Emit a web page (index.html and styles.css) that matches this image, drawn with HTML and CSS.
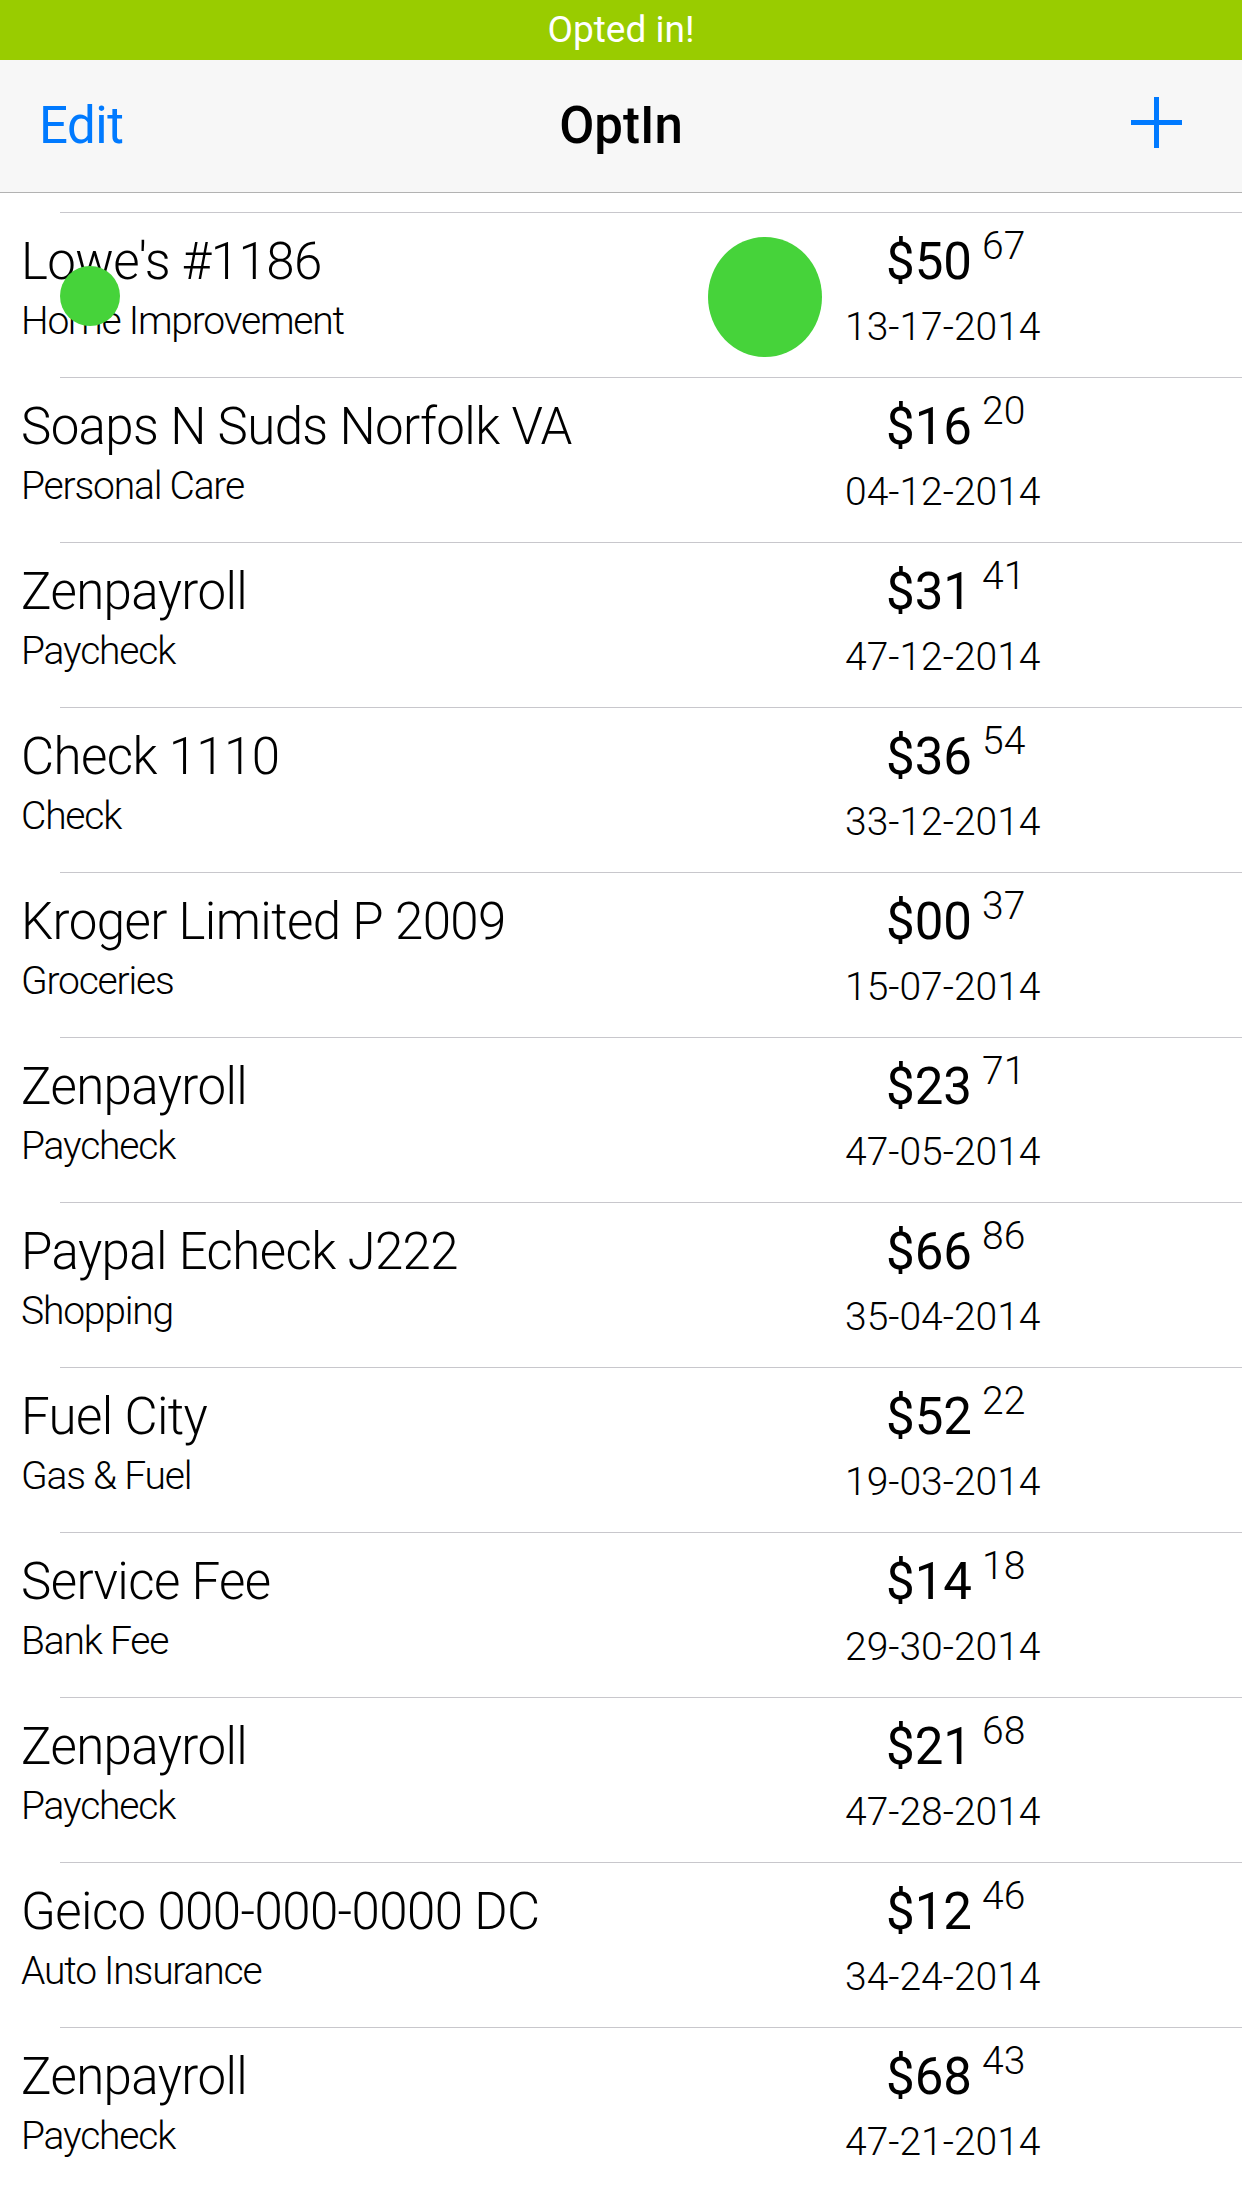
FILE: index.html
```html
<!DOCTYPE html>
<html lang="en">
    <head>
        <meta charset="UTF-8" />
        <meta name="viewport" content="width=device-width, initial-scale=1.0" />
        <title>OptIn</title>
        <link rel="stylesheet" href="styles.css">
    </head>
    <body>
        <div class="banner">Opted in!</div>

        <div class="navbar">
            <span class="nav-edit">Edit</span>
            <span class="nav-title">OptIn</span>
            <svg class="nav-add" width="51" height="51" viewBox="0 0 51 51">
                <rect x="23" y="0" width="5" height="51" fill="#007aff" />
                <rect x="0" y="23" width="51" height="5" fill="#007aff" />
            </svg>
        </div>

        <ul class="list">
            <li class="row">
                <div class="info">
                    <div class="name">Lowe's #1186</div>
                    <div class="category">Home Improvement</div>
                </div>
                <div class="money">
                    <div class="amount">$50<sup>67</sup></div>
                    <div class="date">13-17-2014</div>
                </div>
            </li>
            <li class="row">
                <div class="info">
                    <div class="name">Soaps N Suds Norfolk VA</div>
                    <div class="category">Personal Care</div>
                </div>
                <div class="money">
                    <div class="amount">$16<sup>20</sup></div>
                    <div class="date">04-12-2014</div>
                </div>
            </li>
            <li class="row">
                <div class="info">
                    <div class="name">Zenpayroll</div>
                    <div class="category">Paycheck</div>
                </div>
                <div class="money">
                    <div class="amount">$31<sup>41</sup></div>
                    <div class="date">47-12-2014</div>
                </div>
            </li>
            <li class="row">
                <div class="info">
                    <div class="name">Check 1110</div>
                    <div class="category">Check</div>
                </div>
                <div class="money">
                    <div class="amount">$36<sup>54</sup></div>
                    <div class="date">33-12-2014</div>
                </div>
            </li>
            <li class="row">
                <div class="info">
                    <div class="name">Kroger Limited P 2009</div>
                    <div class="category">Groceries</div>
                </div>
                <div class="money">
                    <div class="amount">$00<sup>37</sup></div>
                    <div class="date">15-07-2014</div>
                </div>
            </li>
            <li class="row">
                <div class="info">
                    <div class="name">Zenpayroll</div>
                    <div class="category">Paycheck</div>
                </div>
                <div class="money">
                    <div class="amount">$23<sup>71</sup></div>
                    <div class="date">47-05-2014</div>
                </div>
            </li>
            <li class="row">
                <div class="info">
                    <div class="name">Paypal Echeck J222</div>
                    <div class="category">Shopping</div>
                </div>
                <div class="money">
                    <div class="amount">$66<sup>86</sup></div>
                    <div class="date">35-04-2014</div>
                </div>
            </li>
            <li class="row">
                <div class="info">
                    <div class="name">Fuel City</div>
                    <div class="category">Gas &amp; Fuel</div>
                </div>
                <div class="money">
                    <div class="amount">$52<sup>22</sup></div>
                    <div class="date">19-03-2014</div>
                </div>
            </li>
            <li class="row">
                <div class="info">
                    <div class="name">Service Fee</div>
                    <div class="category">Bank Fee</div>
                </div>
                <div class="money">
                    <div class="amount">$14<sup>18</sup></div>
                    <div class="date">29-30-2014</div>
                </div>
            </li>
            <li class="row">
                <div class="info">
                    <div class="name">Zenpayroll</div>
                    <div class="category">Paycheck</div>
                </div>
                <div class="money">
                    <div class="amount">$21<sup>68</sup></div>
                    <div class="date">47-28-2014</div>
                </div>
            </li>
            <li class="row">
                <div class="info">
                    <div class="name">Geico 000-000-0000 DC</div>
                    <div class="category">Auto Insurance</div>
                </div>
                <div class="money">
                    <div class="amount">$12<sup>46</sup></div>
                    <div class="date">34-24-2014</div>
                </div>
            </li>
            <li class="row">
                <div class="info">
                    <div class="name">Zenpayroll</div>
                    <div class="category">Paycheck</div>
                </div>
                <div class="money">
                    <div class="amount">$68<sup>43</sup></div>
                    <div class="date">47-21-2014</div>
                </div>
            </li>
        </ul>

        <!-- touch indicators -->
        <div class="touch touch-small"></div>
        <div class="touch touch-big"></div>
    </body>
</html>
```

FILE: styles.css
```css
body {
    margin: 0;
    font-family: Roboto, "Liberation Sans", sans-serif;
    background-color: white;
    color: #000;
    position: relative;
}

.banner {
    height: 60px;
    background-color: #99cc00;
    color: white;
    font-size: 37px;
    line-height: 60px;
    text-align: center;
}

.navbar {
    height: 132px;
    background-color: #f7f7f7;
    border-bottom: 1px solid #b2b2b2;
    display: flex;
    align-items: center;
    justify-content: space-between;
    padding: 0 60px 0 39px;
    position: relative;
}

.nav-edit {
    color: #007aff;
    font-size: 51px;
    line-height: 60px;
    letter-spacing: -0.5px;
}

.nav-title {
    position: absolute;
    left: 0;
    right: 0;
    text-align: center;
    font-size: 51px;
    font-weight: 500;
    line-height: 60px;
    pointer-events: none;
}

.nav-add {
    display: block;
    margin-top: -8px;
}

.list {
    list-style: none;
    margin: 0;
    padding: 19px 0 0 0;
}

.row {
    position: relative;
    height: 164px;
    display: flex;
    justify-content: space-between;
    padding: 1px 197px 0 21px;
}

.row::before {
    content: "";
    position: absolute;
    top: 0;
    left: 60px;
    right: 0;
    height: 1px;
    background-color: #c8c7cc;
}

.row:last-child::after {
    content: "";
    position: absolute;
    bottom: -1px;
    left: 60px;
    right: 0;
    height: 1px;
    background-color: #c8c7cc;
}

.info {
    padding-top: 19px;
    font-weight: 300;
}

.name {
    font-size: 51px;
    line-height: 60px;
    letter-spacing: -0.6px;
}

.category {
    font-size: 39px;
    line-height: 48px;
    margin-top: 5px;
    letter-spacing: -1.2px;
}

.money {
    width: 200px;
    padding-top: 19px;
}

.amount {
    font-size: 51px;
    line-height: 60px;
    padding-left: 41px;
}

.amount sup {
    font-size: 39px;
    font-weight: 300;
    vertical-align: 20px;
    line-height: 0;
    margin-left: 10px;
}

.date {
    font-size: 39px;
    font-weight: 300;
    line-height: 48px;
    margin-top: 11px;
}

.touch {
    position: absolute;
    background-color: #46d33a;
    border-radius: 50%;
}

.touch-small {
    left: 60px;
    top: 266px;
    width: 60px;
    height: 60px;
}

.touch-big {
    left: 708px;
    top: 237px;
    width: 114px;
    height: 120px;
}
```
